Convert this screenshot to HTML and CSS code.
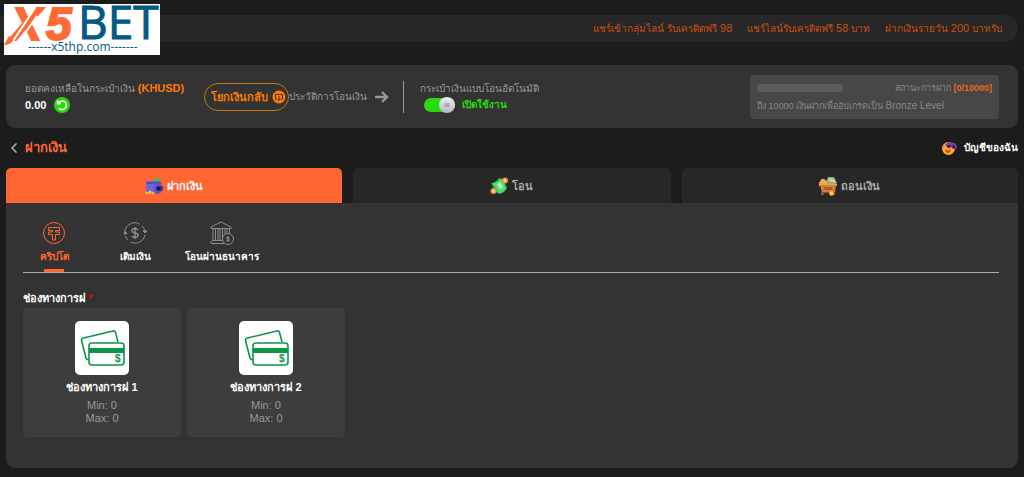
FILE: index.html
```html
<!DOCTYPE html>
<html lang="th">
<head>
    <meta charset="UTF-8">
    <meta name="viewport" content="width=device-width, initial-scale=1.0">
    <title>X5BET</title>
    <link rel="stylesheet" href="styles.css">
</head>
<body>
    <!-- shared shapes -->
    <svg class="defs" aria-hidden="true">
        <symbol id="cards" viewBox="0 0 54 54">
            <g fill="none" stroke="#0a9548" stroke-width="1.6">
                <path d="M43 21 40.500 11.500Q40 9.500 38 10L8.500 17Q6 17.600 6.600 20L11 37Q11.500 39 14 38.500" />
                <rect x="14" y="22" width="35" height="22" rx="3" fill="#fff" />
            </g>
            <path fill="#0a9548" d="M14 27h35v5H14z" />
            <text x="40" y="41" font-size="10" font-weight="bold" fill="#0a9548">$</text>
        </symbol>
    </svg>

    <header class="header">
        <a class="logo" href="#" aria-label="X5BET">
            <svg viewBox="0 0 156 51" width="156" height="51">
                <rect width="156" height="51" fill="#fff" />
                <g class="logo-bold">
                    <text x="7" y="36">X</text>
                    <text x="42" y="36">5</text>
                </g>
                <!-- ribbon cuts and tail on the X -->
                <path fill="none" stroke="#fff" stroke-width="2" d="M9 37 31 4M15 38 33 12" />
                <path fill="#ff6b35" d="M0 41 5 32l5 3-3 4Q4 41 0 41z" />
                <text class="logo-bet" x="74" y="35">BET</text>
                <text class="logo-site" x="24" y="47">------x5thp.com-------</text>
            </svg>
        </a>
        <div class="news">
            <a href="#">แชร์เข้ากลุ่มไลน์ รับเครดิตฟรี <span class="num">98</span></a>
            <a href="#">แชร์ไลน์รับเครดิตฟรี <span class="num">58</span> บาท</a>
            <a href="#">ฝากเงินรายวัน <span class="num">200</span> บาทรับ</a>
        </div>
    </header>

    <main class="page">
        <section class="wallet">
            <div class="balance">
                <div class="muted">ยอดคงเหลือในกระเป๋าเงิน <b class="currency">(KHUSD)</b></div>
                <div class="amount">
                    <b>0.00</b>
                    <button class="refresh" type="button" aria-label="refresh">
                        <svg viewBox="0 0 16 16" width="16" height="16">
                            <circle cx="8" cy="8" r="8" fill="#29d90b" />
                            <path d="M4.200 6.500A4.300 4.300 0 1 1 5 11.300M3.500 3.500v3.300h3.500" fill="none" stroke="#fff" stroke-width="1.600" />
                        </svg>
                    </button>
                </div>
            </div>
            <button class="restore" type="button">
                <span>โยกเงินกลับ</span>
                <svg viewBox="0 0 14 14" width="14" height="14">
                    <circle cx="7" cy="7" r="6.500" fill="#ff7a00" />
                    <path d="M5 9H3.500V4.500h7V9H9M7 6v4.500M5.500 9 7 10.500 8.500 9" fill="none" stroke="#333" />
                </svg>
            </button>
            <a class="history" href="#">
                <span>ประวัติการโอนเงิน</span>
                <svg viewBox="0 0 14 14" width="14" height="14">
                    <path d="M0 7h12M7 2l5 5-5 5" fill="none" stroke="#999" stroke-width="2.400" />
                </svg>
            </a>
            <div class="auto">
                <label class="muted" for="auto">กระเป๋าเงินแบบโอนอัตโนมัติ</label>
                <div class="auto-row">
                    <input class="switch" id="auto" type="checkbox" checked>
                    <span class="auto-on">เปิดใช้งาน</span>
                </div>
            </div>
            <div class="level">
                <div class="level-top">
                    <div class="level-bar"></div>
                    <div>สถานะการฝาก <span class="level-count">[0/10000]</span></div>
                </div>
                <div>ถึง 10000 เงินฝากเพื่ออัปเกรดเป็น <span class="level-name">Bronze Level</span></div>
            </div>
        </section>

        <div class="title-row">
            <a class="back" href="#" aria-label="back">
                <svg viewBox="0 0 8 10" width="8" height="10">
                    <path d="M6.500 .5 2 5l4.500 4.500" fill="none" stroke="#bbb" stroke-width="1.400" />
                </svg>
            </a>
            <h1 class="title">ฝากเงิน</h1>
            <a class="account" href="#">
                <svg viewBox="0 0 16 16" width="16" height="16">
                    <circle cx="7.500" cy="8.500" r="6.500" fill="#ffa726" />
                    <path d="m4 5 3-3 7 1 2 3-1 3-3 0-2-2-3 1z" fill="#7b3fa0" />
                    <path d="M6 6l3-1 1 2-3 1zM11 5l3 1v2l-2 0z" fill="#2c1950" />
                    <path d="M4 9q3 3 6 0-1 4-3 4t-3-4" fill="#d93a1c" />
                </svg>
                <span>บัญชีของฉัน</span>
            </a>
        </div>

        <nav class="tabs">
            <a class="tab active" href="#">
                <svg viewBox="0 0 18 18" width="18" height="18">
                    <path d="M7 5 12 0l5 5z" fill="#3cc24a" />
                    <rect x="1" y="4" width="15" height="12" rx="1.500" fill="#7463d6" />
                    <path d="M1 5h15v2H1z" fill="#5a48bd" />
                    <path d="M10 6q7-1 7 5t-5 6q-3 0-3-3z" fill="#6554c8" />
                    <rect x="11" y="9" width="7" height="5" rx="2" fill="#3c2a86" />
                    <circle cx="13.500" cy="11.500" r="1.500" fill="#15102f" />
                    <circle cx="2" cy="16" r="1.500" fill="#f3b62c" />
                    <circle cx="5" cy="15" r="1.500" fill="#ffd056" />
                    <circle cx="8" cy="16" r="1.500" fill="#f3b62c" />
                </svg>
                <span>ฝากเงิน</span>
            </a>
            <a class="tab" href="#">
                <svg viewBox="0 0 18 18" width="18" height="18">
                    <path d="M1 6q5 0 8-5l4 1 4 9q-2 5-8 6L6 15z" fill="#2ebd55" />
                    <path d="M3 6q5 0 8-4l5 9q-2 4-7 5z" fill="#56dc78" />
                    <path d="m7 7 3-2 3 5-3 2z" fill="#b8f5ad" />
                    <circle cx="15" cy="3.500" r="3" fill="#e9913a" />
                    <circle cx="15" cy="3.500" r="1.500" fill="#ffd3a0" />
                    <circle cx="3.500" cy="14" r="3" fill="#e9913a" />
                    <circle cx="3.500" cy="14" r="1.500" fill="#ffd3a0" />
                </svg>
                <span>โอน</span>
            </a>
            <a class="tab" href="#">
                <svg viewBox="0 0 18 20" width="18" height="20">
                    <path d="M1 6q1-4 4-3l4 3z" fill="#e8b35e" />
                    <path d="m6 8 3-7 6 0 3 6-2 2z" fill="#9ba77b" />
                    <path d="m9 5 2-3 4 1 2 4z" fill="#cdd3b0" />
                    <path d="M0 6h8l1 2h9v2H0z" fill="#f0a647" />
                    <path d="M1 9h16l-1 8H3z" fill="#cf8035" />
                    <path d="M5 11h8v3H5z" fill="#a85c35" />
                    <path d="M2 16h14v1H2zM2 17h3v2H2zM13 17h3v2h-3z" fill="#8e5528" />
                    <circle cx="12.500" cy="17.500" r="2.300" fill="#ffc63f" />
                </svg>
                <span>ถอนเงิน</span>
            </a>
        </nav>

        <section class="panel">
            <nav class="methods">
                <a class="method active" href="#">
                    <svg viewBox="0 0 24 24" width="24" height="24" fill="none" stroke="currentColor">
                        <circle cx="12" cy="12" r="10.500" />
                        <path d="M6.500 6.500h11v3h-4v1.500h4v2.500h-4V19h-3v-5.500h-4V11h4V9.500h-4z" />
                    </svg>
                    <span>คริปโต</span>
                </a>
                <a class="method" href="#">
                    <svg viewBox="0 0 24 24" width="24" height="24" fill="none" stroke="#8e8e8e">
                        <path d="M2 14A10 10 0 0 1 16.500 3M19 5a10 10 0 0 1 3 6M22 14A10 10 0 0 1 7.500 21M5 19a10 10 0 0 1-2.500-4" />
                        <path d="m1 12.500 1-2 2 2zM20 10h4l-2 2z" fill="#8e8e8e" />
                        <path d="M15 9q-1-1.500-3-1.500-3 0-3 2t3 2.500 3 2.200-3 2.300q-2 0-3-1.500M12 6v12" stroke-width="1.400" />
                    </svg>
                    <span>เติมเงิน</span>
                </a>
                <a class="method" href="#">
                    <svg viewBox="0 0 24 24" width="24" height="24" fill="none" stroke="#8e8e8e">
                        <path d="M1 6 11 1l10 5v1.500H1zM3 7.500v12M5.500 7.500v12M8 7.500v12M10 7.500v12M12.500 7.500v12M15 7.500v6M17 7.500V12M19.500 7.500V12M2 19.500h11M1 22.500h13M1 20v2" />
                        <circle cx="18" cy="18" r="5.500" />
                        <path d="M19.500 16.500q-3-1.500-3 .2 0 1 1.500 1.200t1.500 1.300q0 1.500-3 .3M18 15v6" />
                    </svg>
                    <span>โอนผ่านธนาคาร</span>
                </a>
            </nav>

            <h2 class="label">ช่องทางการฝ <span class="required">*</span></h2>
            <div class="channels">
                <button class="channel" type="button">
                    <svg class="channel-pic" width="54" height="54"><use href="#cards" /></svg>
                    <b>ช่องทางการฝ 1</b>
                    <span class="limits">Min: 0<br>Max: 0</span>
                </button>
                <button class="channel" type="button">
                    <svg class="channel-pic" width="54" height="54"><use href="#cards" /></svg>
                    <b>ช่องทางการฝ 2</b>
                    <span class="limits">Min: 0<br>Max: 0</span>
                </button>
            </div>
        </section>
    </main>
</body>
</html>
```
FILE: styles.css
```css
*{
    box-sizing: border-box;
}
body{
    margin: 0;
    background-color: #1c1c1c;
    color: #fff;
    font: 11px/16px "Liberation Sans", Arial, sans-serif;
}
a{
    color: inherit;
    text-decoration: none;
}
button{
    padding: 0;
    border: 0;
    background: none;
    color: inherit;
    font: inherit;
    cursor: pointer;
}
svg{
    display: block;
    flex-shrink: 0;
}
.defs{
    position: absolute;
    width: 0;
    height: 0;
}

/* header */
.header{
    position: relative;
    padding: 15px 6px 23px 0;
}
.logo{
    position: absolute;
    top: 4px;
    left: 4px;
}
.logo-bold{
    font: italic bold 46px "Liberation Sans", sans-serif;
    fill: #ff6b35;
    stroke: #ff6b35;
    stroke-width: 2px;
}
.logo-bet{
    font: 46px "Open Sans", sans-serif;
    fill: #045a83;
    stroke: #045a83;
}
.logo-site{
    font: 12px "Open Sans", sans-serif;
    fill: #045a83;
}
.news{
    display: flex;
    justify-content: flex-end;
    align-items: center;
    gap: 15px;
    height: 27px;
    padding-right: 16px;
    border-radius: 0 14px 14px 0;
    background-color: #272727;
    color: #c9500f;
    font-size: 10px;
    white-space: nowrap;
}
.num{
    font-size: 11px;
}

.page{
    padding: 0 6px 9px;
}
.muted{
    color: #999;
    font-size: 10px;
}

/* wallet */
.wallet{
    display: flex;
    align-items: center;
    min-height: 63px;
    padding: 9px 19px;
    border-radius: 9px;
    background-color: #333;
    white-space: nowrap;
}
.balance{
    width: 179px;
}
.currency{
    color: #ff7a00;
    font-size: 11px;
}
.amount{
    display: flex;
    align-items: center;
    gap: 8px;
}
.restore{
    display: flex;
    align-items: center;
    gap: 4px;
    height: 28px;
    padding: 0 2px 0 6px;
    border: 1px solid #c27a10;
    border-radius: 14px;
    color: #ff7a00;
    font-weight: bold;
}
.history{
    display: flex;
    align-items: center;
    gap: 8px;
    color: #999;
    font-size: 10px;
}
.auto{
    margin-left: 14px;
    padding-left: 16px;
    border-left: 1px solid #999;
}
.auto label{
    display: block;
}
.auto-row{
    display: flex;
    align-items: center;
    gap: 7px;
    padding-left: 4px;
}
.auto-on{
    color: #29d90b;
    font-size: 10px;
    font-weight: bold;
}
.switch{
    appearance: none;
    display: flex;
    justify-content: flex-end;
    align-items: center;
    width: 31px;
    height: 14px;
    margin: 0;
    border-radius: 8px;
    background-color: #29d90b;
}
.switch::after{
    content: "III";
    width: 16px;
    height: 16px;
    border-radius: 50%;
    background: linear-gradient(#eef0f4, #b4b8c2);
    color: #8a8d96;
    font: bold 6px/16px "Liberation Sans", sans-serif;
    text-align: center;
}
.level{
    width: 249px;
    margin-left: auto;
    padding: 4px 7px;
    border-radius: 4px;
    background-color: #474747;
    color: #868686;
    font-size: 9px;
    line-height: 18px;
}
.level-top{
    display: flex;
    justify-content: space-between;
    align-items: center;
}
.level-bar{
    width: 86px;
    height: 8px;
    border-radius: 4px;
    background-color: #5b5b5b;
}
.level-count{
    color: #e8691a;
    font-weight: bold;
}
.level-name{
    font-size: 10px;
}

/* title */
.title-row{
    display: flex;
    align-items: center;
    height: 40px;
}
.back{
    padding: 0 7px 0 4px;
}
.title{
    margin: 0;
    color: #ff6633;
    font-size: 13px;
}
.account{
    display: flex;
    align-items: center;
    gap: 7px;
    margin-left: auto;
    font-size: 10px;
    font-weight: bold;
}

/* tabs */
.tabs{
    display: grid;
    grid-template-columns: 336fr 317fr 336fr;
    gap: 11px;
}
.tab{
    display: flex;
    justify-content: center;
    align-items: center;
    gap: 4px;
    height: 35px;
    border-radius: 5px 5px 0 0;
    background-color: #272727;
    color: #aaa;
    font-weight: bold;
}
.tab.active{
    background-color: #ff6633;
    color: #fff;
}

/* panel */
.panel{
    padding: 18px 19px 31px 17px;
    border-radius: 0 0 9px 9px;
    background-color: #333;
}
.methods{
    display: flex;
    gap: 19px;
    border-bottom: 1px solid #aaa;
}
.method{
    display: flex;
    flex-direction: column;
    align-items: center;
    gap: 4px;
    min-width: 62px;
    font-size: 10px;
    font-weight: bold;
    white-space: nowrap;
}
.method::after{
    content: "";
    width: 20px;
    height: 3px;
}
.method.active{
    color: #ff6633;
}
.method.active::after{
    background-color: #ff6633;
}
.label{
    margin: 17px 0 2px;
    font-size: 11px;
}
.required{
    color: #e00000;
}
.channels{
    display: flex;
    gap: 6px;
}
.channel{
    display: flex;
    flex-direction: column;
    align-items: center;
    width: 158px;
    padding: 13px 0 12px;
    border-radius: 4px;
    background-color: #3d3d3d;
}
.channel-pic{
    margin-bottom: 4px;
    border-radius: 5px;
    background-color: #fff;
}
.limits{
    margin-top: 4px;
    color: #999;
    line-height: 13px;
}
```
